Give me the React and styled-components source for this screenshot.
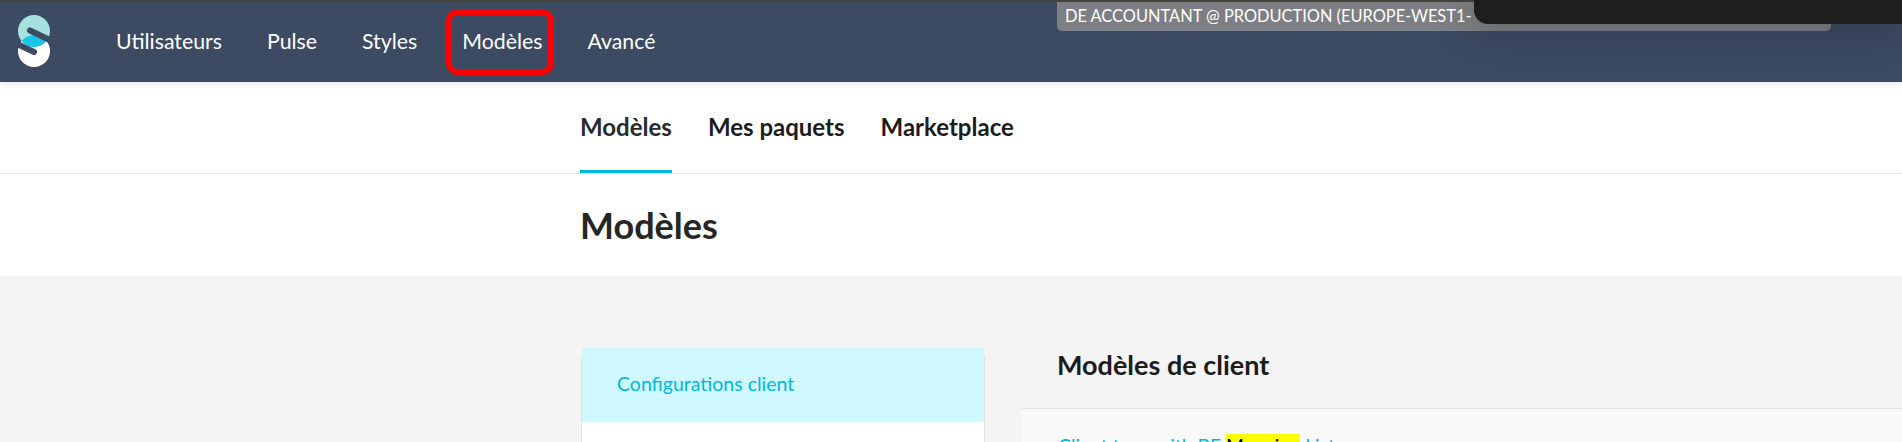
import React from "react";
import styled, { createGlobalStyle } from "styled-components";

const GlobalStyle = createGlobalStyle`
  html, body {
    margin: 0;
    padding: 0;
    height: 100%;
    overflow: hidden;
    background: #f4f4f4;
    font-family: Lato, "Open Sans", sans-serif;
  }
  * {
    box-sizing: border-box;
  }
`;

const Page = styled.div`
  position: relative;
  display: flex;
  flex-direction: column;
  height: 442px;
  overflow: hidden;
`;

const TopBar = styled.header`
  position: relative;
  z-index: 2;
  flex: none;
  display: flex;
  align-items: center;
  height: 82px;
  padding: 0 0 2px 18px;
  background: #3c4a62;
  border-top: 2px solid #44443f;
  box-shadow: 0 1px 8px rgba(0, 0, 0, 0.12);
`;

const LogoBox = styled.svg`
  display: block;
  flex: none;
  width: 32px;
  height: 52px;
  margin-right: 66px;
`;

const NavList = styled.nav`
  display: flex;
  align-items: center;
  gap: 45px;
`;

const NavItem = styled.a`
  color: #ffffff;
  font-size: 21.3px;
  line-height: 26px;
`;

const Ribbon = styled.div`
  position: absolute;
  top: 0;
  left: 1057px;
  width: 774px;
  height: 29px;
  padding-left: 8px;
  background: #7d7f84;
  border-radius: 0 0 5px 5px;
  color: #ffffff;
  font-size: 16.4px;
  line-height: 27px;
  white-space: nowrap;
`;

const NotchOverlay = styled.div`
  position: absolute;
  z-index: 4;
  top: 0;
  left: 1474px;
  right: 0;
  height: 24px;
  background: #1e1e1e;
  border-bottom-left-radius: 14px;
  box-shadow: 0 0 44px rgba(0, 0, 0, 0.35);
`;

const Annotation = styled.div`
  position: absolute;
  z-index: 3;
  top: 9px;
  left: 446px;
  width: 108px;
  height: 66px;
  border: 6px solid #ff0000;
  border-radius: 12px;
`;

const SubNav = styled.div`
  flex: none;
  display: flex;
  gap: 36px;
  height: 92px;
  padding-left: 580px;
  background: #ffffff;
  border-bottom: 1px solid #e3e3e3;
`;

const Tab = styled.a`
  height: 91px;
  padding-top: 31px;
  border-bottom: 3px solid ${(p) => (p.$active ? "#00b8d9" : "transparent")};
  color: ${(p) => (p.$active ? "#2a2a2a" : "#1c1c1c")};
  font-size: 24px;
  font-weight: 700;
  line-height: 28px;
`;

const TitleBar = styled.div`
  flex: none;
  height: 102px;
  padding: 29px 0 0 580px;
  background: #ffffff;
`;

const PageTitle = styled.h1`
  margin: 0;
  color: #262626;
  font-size: 36px;
  font-weight: 700;
  line-height: 44px;
`;

const Content = styled.main`
  flex: none;
  display: grid;
  grid-template-columns: 404px 1fr;
  column-gap: 37px;
  padding: 72px 0 0 581px;
  background: #f4f4f4;
`;

const SideCard = styled.aside`
  height: 200px;
  background: #ffffff;
  border: 1px solid #e3e3e3;
  border-top: 0;
  border-radius: 10px 10px 0 0;
`;

const SideItem = styled.a`
  display: block;
  height: 74px;
  padding: 21px 35px 0;
  background: ${(p) => (p.$active ? "#cff9fe" : "#ffffff")};
  color: #00b8d9;
  font-size: 19.5px;
  line-height: 30px;
`;

const Section = styled.section`
  display: flex;
  flex-direction: column;
`;

const SectionTitle = styled.h2`
  height: 60px;
  margin: 0 0 0 35px;
  color: #1c1c1c;
  font-size: 27px;
  font-weight: 700;
  line-height: 34px;
`;

const ListPanel = styled.div`
  flex: 1;
  height: 100px;
  padding: 25px 36px 0;
  background: #fafafa;
  border-top: 1px solid #e3e3e3;
`;

const ClientLink = styled.a`
  color: #00b8d9;
  font-size: 19.3px;
  line-height: 24px;
  white-space: nowrap;
`;

const Match = styled.mark`
  background: #ffff00;
  color: #000000;
`;

function Logo() {
  return (
    <LogoBox viewBox="0 0 32 52" aria-label="Logo">
      <defs>
        <clipPath id="lens">
          <circle cx="16" cy="16" r="16" />
        </clipPath>
      </defs>
      <circle cx="16" cy="16" r="16" fill="#a6e1de" />
      <circle cx="16" cy="36" r="16" fill="#ffffff" />
      <circle cx="16" cy="36" r="16" fill="#17c5e8" clipPath="url(#lens)" />
      <path
        d="M12 15.5 L36 27 M-4 27.5 L16 37"
        stroke="#3c4a62"
        strokeWidth="6"
        strokeLinecap="round"
        fill="none"
      />
    </LogoBox>
  );
}

const navItems = ["Utilisateurs", "Pulse", "Styles", "Modèles", "Avancé"];
const tabs = ["Modèles", "Mes paquets", "Marketplace"];

export default function App() {
  return (
    <>
      <GlobalStyle />
      <Page>
        <TopBar>
          <Logo />
          <NavList>
            {navItems.map((item) => (
              <NavItem key={item}>{item}</NavItem>
            ))}
          </NavList>
          <Ribbon>DE ACCOUNTANT @ PRODUCTION (EUROPE-WEST1-</Ribbon>
        </TopBar>
        <Annotation />
        <NotchOverlay />
        <SubNav>
          {tabs.map((tab, i) => (
            <Tab key={tab} $active={i === 0}>
              {tab}
            </Tab>
          ))}
        </SubNav>
        <TitleBar>
          <PageTitle>Modèles</PageTitle>
        </TitleBar>
        <Content>
          <SideCard>
            <SideItem $active>Configurations client</SideItem>
          </SideCard>
          <Section>
            <SectionTitle>Modèles de client</SectionTitle>
            <ListPanel>
              <ClientLink>
                Client type with BE <Match>Mapping</Match> List
              </ClientLink>
            </ListPanel>
          </Section>
        </Content>
      </Page>
    </>
  );
}
